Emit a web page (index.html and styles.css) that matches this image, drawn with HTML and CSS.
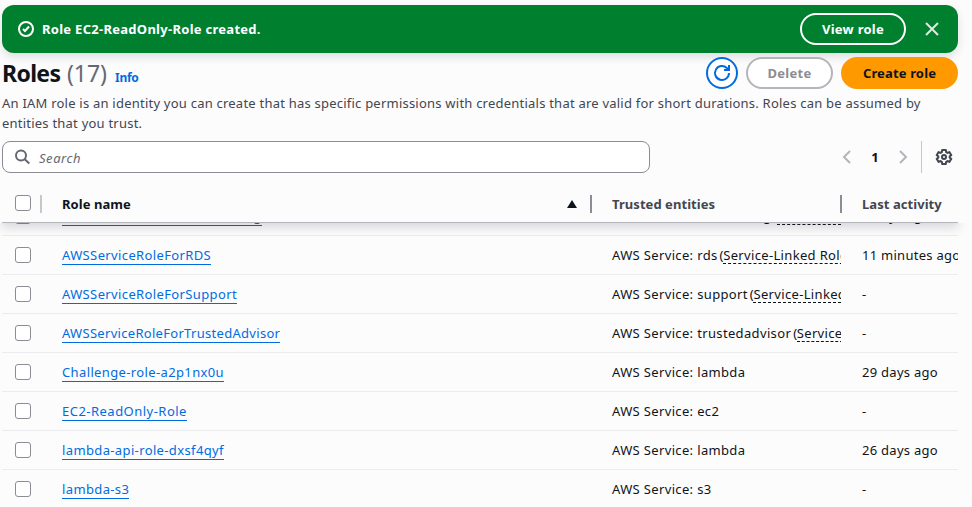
FILE: index.html
```html
<!DOCTYPE html>
<html lang="en">
<head>
<meta charset="utf-8">
<title>Roles</title>
<link rel="stylesheet" href="styles.css">
</head>
<body>
<main class="page">
  <div class="flash">
    <svg class="icon flash-icon" viewBox="0 0 16 16"><circle cx="8" cy="8" r="7"/><path d="m5 8 2 2 4-4.500"/></svg>
    <p class="flash-text">Role EC2-ReadOnly-Role created.</p>
    <button class="btn btn-flash">View role</button>
    <button class="btn-icon close" aria-label="Close"><svg class="icon" viewBox="0 0 16 16"><path d="m2 2 12 12M14 2 2 14"/></svg></button>
  </div>
  <header class="heading">
    <h1><span class="title">Roles</span><span class="counter">(17)</span></h1>
    <a class="info">Info</a>
    <div class="actions">
      <button class="btn btn-refresh" aria-label="Refresh"><svg class="icon" viewBox="0 0 16 16"><path d="M15 8a7 7 0 1 1-2.200-5.100L15 5"/><path d="M15 0v5h-5"/></svg></button>
      <button class="btn btn-delete">Delete</button>
      <button class="btn btn-primary">Create role</button>
    </div>
  </header>
  <p class="description">An IAM role is an identity you can create that has specific permissions with credentials that are valid for short durations. Roles can be assumed by<br>entities that you trust.</p>
  <div class="tools">
    <div class="search">
      <svg class="icon" viewBox="0 0 16 16"><circle cx="6" cy="6.500" r="5"/><path d="m9.700 10.200 4.600 4.300"/></svg>
      <span class="placeholder">Search</span>
    </div>
    <div class="pager">
      <svg class="icon arrow" viewBox="0 0 16 16"><path d="m11 2-6 6 6 6"/></svg>
      <span class="page-number">1</span>
      <svg class="icon arrow" viewBox="0 0 16 16"><path d="m5 2 6 6-6 6"/></svg>
      <span class="rule"></span>
      <svg class="icon gear" viewBox="0 0 16 16"><path d="M6.300 1h3.400l.5 2 1.300.8 2-.6 1.700 2.900L13.700 7.500v1l1.500 1.400-1.700 2.900-2-.6-1.300.8-.5 2H6.300l-.5-2-1.300-.8-2 .6L.8 9.900l1.500-1.400v-1L.8 6.100l1.700-2.900 2 .6L5.800 3z"/><circle cx="8" cy="8" r="2"/></svg>
    </div>
  </div>
  <section class="table">
    <div class="row head">
      <div class="cell check"><span class="box"></span><span class="divider light"></span></div>
      <div class="cell name"><span>Role name</span><span class="sort"></span><span class="divider"></span></div>
      <div class="cell trusted"><span>Trusted entities</span><span class="divider"></span></div>
      <div class="cell activity"><span>Last activity</span></div>
    </div>
    <div class="body">
      <div class="row"><div class="cell check"><span class="box"></span></div><div class="cell name"><a>AWSServiceRoleForAutoScaling</a></div><div class="cell trusted"><span>AWS Service: autoscaling</span><span class="paren">(</span><span class="linked">Service-Linked Role</span></div><div class="cell activity"><span>6 days ago</span></div></div>
      <div class="row"><div class="cell check"><span class="box"></span></div><div class="cell name"><a>AWSServiceRoleForRDS</a></div><div class="cell trusted"><span>AWS Service: rds</span><span class="paren">(</span><span class="linked">Service-Linked Role</span></div><div class="cell activity"><span>11 minutes ago</span></div></div>
      <div class="row"><div class="cell check"><span class="box"></span></div><div class="cell name"><a>AWSServiceRoleForSupport</a></div><div class="cell trusted"><span>AWS Service: support</span><span class="paren">(</span><span class="linked">Service-Linked</span></div><div class="cell activity"><span>-</span></div></div>
      <div class="row"><div class="cell check"><span class="box"></span></div><div class="cell name"><a class="long">AWSServiceRoleForTrustedAdvisor</a></div><div class="cell trusted"><span>AWS Service: trustedadvisor</span><span class="paren">(</span><span class="linked">Service</span></div><div class="cell activity"><span>-</span></div></div>
      <div class="row"><div class="cell check"><span class="box"></span></div><div class="cell name"><a>Challenge-role-a2p1nx0u</a></div><div class="cell trusted"><span>AWS Service: lambda</span></div><div class="cell activity"><span>29 days ago</span></div></div>
      <div class="row"><div class="cell check"><span class="box"></span></div><div class="cell name"><a class="wide">EC2-ReadOnly-Role</a></div><div class="cell trusted"><span>AWS Service: ec2</span></div><div class="cell activity"><span>-</span></div></div>
      <div class="row"><div class="cell check"><span class="box"></span></div><div class="cell name"><a>lambda-api-role-dxsf4qyf</a></div><div class="cell trusted"><span>AWS Service: lambda</span></div><div class="cell activity"><span>26 days ago</span></div></div>
      <div class="row"><div class="cell check"><span class="box"></span></div><div class="cell name"><a>lambda-s3</a></div><div class="cell trusted"><span>AWS Service: s3</span></div><div class="cell activity"><span>-</span></div></div>
    </div>
  </section>
</main>
</body>
</html>
```

FILE: styles.css
```css
* { box-sizing: border-box; }
body { margin: 0; height: 507px; overflow: hidden; background: #fcfcfd; color: #0f141a; font: 13px/20px "Noto Sans", sans-serif; }
p, h1 { margin: 0; }
button { font: inherit; margin: 0; }
.page { width: 956px; height: 507px; margin-left: 2px; padding-top: 5px; display: flex; flex-direction: column; }
.icon { display: block; flex: none; width: 16px; height: 16px; fill: none; stroke: currentColor; stroke-width: 2; overflow: visible; }
.flash { height: 48px; flex: none; display: flex; align-items: center; padding: 0 18px 0 16px; border-radius: 12px; background: #00802f; color: #fff; box-shadow: 0 4px 10px rgba(0, 7, 22, .12); }
.flash-text { flex: 1; margin-left: 8px; font-weight: 700; letter-spacing: .28px; }
.btn { height: 32px; display: flex; align-items: center; justify-content: center; padding: 0; border: 2px solid; border-radius: 16px; font-weight: 700; letter-spacing: .25px; }
.btn-flash { width: 106px; background: none; color: #fff; border-color: #fff; }
.btn-icon { padding: 0; border: 0; background: none; }
.close { margin-left: 18px; width: 16px; color: #e2e8e4; }
.heading { flex: none; display: flex; height: 32px; margin-top: 4px; }
h1 { display: flex; width: 105px; justify-content: space-between; font-size: 23px; line-height: 32px; font-weight: 700; white-space: nowrap; }
.title { letter-spacing: -.65px; }
.counter { font-weight: 400; color: #656871; }
.info { margin: 11px 0 0 8px; font-size: 12px; letter-spacing: -.25px; font-weight: 700; color: #006ce0; }
.actions { margin-left: auto; display: flex; gap: 8px; }
.btn-refresh { width: 32px; color: #006ce0; background: #fff; }
.btn-delete { width: 87px; color: #8c8c94; border-color: #b4b4bb; background: #fff; }
.btn-primary { width: 117px; color: #0f141a; border-color: #f90; background: #f90; letter-spacing: .15px; }
.description { flex: none; margin-top: 4px; color: #424650; white-space: nowrap; letter-spacing: .225px; }
.description::first-line { letter-spacing: .225px; }
.tools { flex: none; display: flex; justify-content: space-between; margin-top: 8px; height: 32px; }
.search { width: 648px; display: flex; align-items: center; padding: 0 12px; gap: 8px; border: 1px solid #8c8c94; border-radius: 8px; background: #fff; color: #656871; }
.placeholder { font-style: italic; letter-spacing: .55px; padding-top: 1px; }
.pager { display: flex; align-items: center; padding-right: 6px; }
.arrow { color: #b4b4bb; }
.page-number { width: 40px; text-align: center; font-weight: 700; }
.rule { width: 1px; height: 32px; margin: 0 14px 0 10px; background: #c6c6cd; }
.gear { color: #424650; }
.table { flex: 1; margin-top: 12px; min-height: 0; display: flex; flex-direction: column; }
.row { display: grid; grid-template-columns: 40px 550px 250px 116px; height: 39px; border-bottom: 1px solid #ebebf0; letter-spacing: .35px; }
.cell { display: flex; align-items: center; min-width: 0; white-space: nowrap; overflow: hidden; }
.head { flex: none; height: 38px; position: relative; z-index: 1; font-weight: 700; background: #fcfcfd; border-bottom: 1px solid #b4b4bb; color: #424650; letter-spacing: .06px; }
.head::after { content: ""; position: absolute; inset: 0 0 -1px; box-shadow: 0 4px 10px 1px rgba(0, 7, 22, .14); clip-path: inset(100% -16px -24px -16px); }
.head .name { color: #0f141a; }
.check { padding-left: 13px; }
.box { width: 16px; height: 16px; flex: none; border: 1px solid #8c8c94; border-radius: 3px; background: #fff; }
.head .box { margin-bottom: 2px; }
.name { padding-left: 20px; }
.trusted, .activity { padding-left: 20px; }
.body .trusted { margin-right: 1px; }
.divider { width: 2px; height: 18px; margin-left: auto; background: #8c8c94; }
.light { background: #c6c6cd; }
.sort { margin-left: auto; border: 5px solid transparent; border-top: 0; border-bottom: 8px solid #0f141a; }
.sort + .divider { margin-left: 13px; }
.body { flex: 1; min-height: 0; overflow: hidden; }
.body .row:first-child { margin-top: -26px; }
.body a { color: #006ce0; line-height: 18px; border-bottom: 1px solid #006ce0; letter-spacing: .37px; }
.body a.long { letter-spacing: .3px; }
.body a.wide { letter-spacing: .48px; }
.paren { margin-left: 2px; letter-spacing: -.3px; }
.linked { margin-bottom: 1px; padding-top: 2px; line-height: 16px; border-bottom: 1px dashed #0f141a; letter-spacing: .34px; }
.body .activity { letter-spacing: .27px; }
```
